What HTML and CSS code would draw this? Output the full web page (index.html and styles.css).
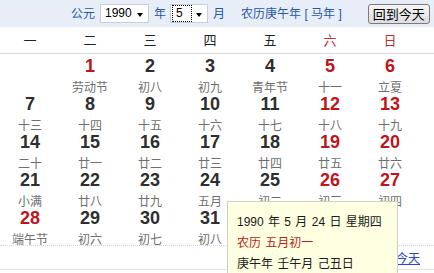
FILE: index.html
```html
<!DOCTYPE html>
<html lang="zh-CN">
<head>
<meta charset="utf-8">
<title>万年历</title>
<link rel="stylesheet" href="styles.css">
</head>
<body>
<div class="topbar">
  <span class="lbl">公元</span>
  <span class="sel sel-year"><span class="val">1990</span><span class="arrow"></span></span>
  <span class="lbl lbl-y">年</span>
  <span class="sel sel-month"><span class="val focus">5</span><span class="arrow"></span></span>
  <span class="lbl lbl-m">月</span>
  <span class="lbl lunar-year">农历庚午年 [ 马年 ]</span>
  <button class="today-btn">回到今天</button>
</div>
<div class="weekhead">
  <div class="wd">一</div><div class="wd">二</div><div class="wd">三</div><div class="wd">四</div><div class="wd">五</div><div class="wd we">六</div><div class="wd we">日</div>
</div>
<div class="grid">
  <div class="cell"></div>
  <div class="cell"><div class="num red">1</div><div class="lun">劳动节</div></div>
  <div class="cell"><div class="num">2</div><div class="lun">初八</div></div>
  <div class="cell"><div class="num">3</div><div class="lun">初九</div></div>
  <div class="cell"><div class="num">4</div><div class="lun">青年节</div></div>
  <div class="cell"><div class="num red">5</div><div class="lun">十一</div></div>
  <div class="cell"><div class="num red">6</div><div class="lun">立夏</div></div>

  <div class="cell"><div class="num">7</div><div class="lun">十三</div></div>
  <div class="cell"><div class="num">8</div><div class="lun">十四</div></div>
  <div class="cell"><div class="num">9</div><div class="lun">十五</div></div>
  <div class="cell"><div class="num">10</div><div class="lun">十六</div></div>
  <div class="cell"><div class="num">11</div><div class="lun">十七</div></div>
  <div class="cell"><div class="num red">12</div><div class="lun">十八</div></div>
  <div class="cell"><div class="num red">13</div><div class="lun">十九</div></div>

  <div class="cell"><div class="num">14</div><div class="lun">二十</div></div>
  <div class="cell"><div class="num">15</div><div class="lun">廿一</div></div>
  <div class="cell"><div class="num">16</div><div class="lun">廿二</div></div>
  <div class="cell"><div class="num">17</div><div class="lun">廿三</div></div>
  <div class="cell"><div class="num">18</div><div class="lun">廿四</div></div>
  <div class="cell"><div class="num red">19</div><div class="lun">廿五</div></div>
  <div class="cell"><div class="num red">20</div><div class="lun">廿六</div></div>

  <div class="cell"><div class="num">21</div><div class="lun">小满</div></div>
  <div class="cell"><div class="num">22</div><div class="lun">廿八</div></div>
  <div class="cell"><div class="num">23</div><div class="lun">廿九</div></div>
  <div class="cell"><div class="num">24</div><div class="lun">五月</div></div>
  <div class="cell"><div class="num">25</div><div class="lun">初二</div></div>
  <div class="cell"><div class="num red">26</div><div class="lun">初三</div></div>
  <div class="cell"><div class="num red">27</div><div class="lun">初四</div></div>

  <div class="cell"><div class="num red">28</div><div class="lun">端午节</div></div>
  <div class="cell"><div class="num">29</div><div class="lun">初六</div></div>
  <div class="cell"><div class="num">30</div><div class="lun">初七</div></div>
  <div class="cell"><div class="num">31</div><div class="lun">初八</div></div>
  <div class="cell"></div>
  <div class="cell"></div>
  <div class="cell"></div>
</div>
<div class="footer">
  <a class="today-link" href="#">今天</a>
</div>
<div class="tooltip">
  <div class="tip-line">1990 年 5 月 24 日 星期四</div>
  <div class="tip-line tip-red">农历 五月初一</div>
  <div class="tip-line">庚午年 壬午月 己丑日</div>
</div>
</body>
</html>
```

FILE: styles.css
```css
* {
  box-sizing: border-box;
  margin: 0;
  padding: 0;
}

body {
  width: 434px;
  height: 273px;
  overflow: hidden;
  position: relative;
  background: #ffffff;
  font-family: "Liberation Sans", "Noto Sans CJK SC", sans-serif;
  color: #222;
}

.topbar {
  height: 27px;
  background: #e7eef8;
  display: flex;
  align-items: center;
  padding-left: 71px;
  font-size: 12px;
  color: #2b57a8;
}

.lbl {
  line-height: 16px;
  white-space: nowrap;
}

.sel {
  position: relative;
  height: 19px;
  margin-left: 5px;
  background: #ffffff;
  border: 1px solid #c3cfdf;
  display: flex;
  align-items: center;
  color: #000;
  font-size: 12px;
}

.sel-year {
  width: 49px;
  padding-left: 4px;
}

.sel-month {
  width: 38px;
  padding-left: 1px;
  margin-left: 4px;
}

.val {
  line-height: 15px;
}

.focus {
  width: 20px;
  height: 17px;
  padding-left: 4px;
  line-height: 16px;
  outline: 1px dotted #000;
  outline-offset: -1px;
}

.arrow {
  position: absolute;
  right: 5px;
  top: 8px;
  width: 0;
  height: 0;
  border-left: 3px solid transparent;
  border-right: 3px solid transparent;
  border-top: 4px solid #000;
}

.lbl-y {
  margin-left: 5px;
}

.lbl-m {
  margin-left: 5px;
}

.lunar-year {
  margin-left: 16px;
}

.today-btn {
  margin-left: 26px;
  height: 20px;
  width: 62px;
  border: 1px solid #7a7a7a;
  border-radius: 3px;
  background: linear-gradient(#f6f6f6, #dedede);
  font-family: "Noto Sans CJK SC", sans-serif;
  font-size: 13px;
  line-height: 18px;
  color: #000;
  padding: 0;
}

.weekhead {
  height: 27px;
  border-bottom: 1px solid #d9d9d9;
  display: grid;
  grid-template-columns: repeat(7, 60px);
}

.wd {
  text-align: center;
  font-family: "Noto Sans CJK SC", sans-serif;
  font-size: 13px;
  line-height: 26px;
  color: #222;
}

.wd.we {
  color: #b8323a;
}

.grid {
  display: grid;
  grid-template-columns: repeat(7, 60px);
  grid-auto-rows: 38px;
  padding-top: 1px;
}

.cell {
  text-align: center;
}

.num {
  font-family: "Liberation Sans", sans-serif;
  font-weight: bold;
  font-size: 18px;
  line-height: 23px;
  color: #2e2e2e;
}

.num.red {
  color: #c0141c;
}

.lun {
  margin-top: 2px;
  font-family: "Noto Sans CJK SC", sans-serif;
  font-size: 12px;
  line-height: 13px;
  color: #6e6e6e;
}

.footer {
  height: 25px;
  border-top: 1px dotted #d6d6d6;
  border-bottom: 1px solid #e2e2e2;
  display: flex;
  justify-content: flex-end;
  align-items: center;
  padding-right: 14px;
}

.today-link {
  font-family: "Noto Sans CJK SC", sans-serif;
  font-size: 12px;
  line-height: 14px;
  color: #2a47c9;
  text-decoration: underline;
}

.tooltip {
  position: absolute;
  left: 227px;
  top: 201px;
  width: 171px;
  height: 80px;
  background: #ffffe1;
  border: 1px solid #cfcfc4;
  padding: 10px 0 0 9px;
  font-size: 12px;
  color: #1a1a1a;
}

.tip-line {
  line-height: 21px;
  white-space: nowrap;
  word-spacing: 1px;
}

.tip-red {
  color: #b8231c;
}
```
